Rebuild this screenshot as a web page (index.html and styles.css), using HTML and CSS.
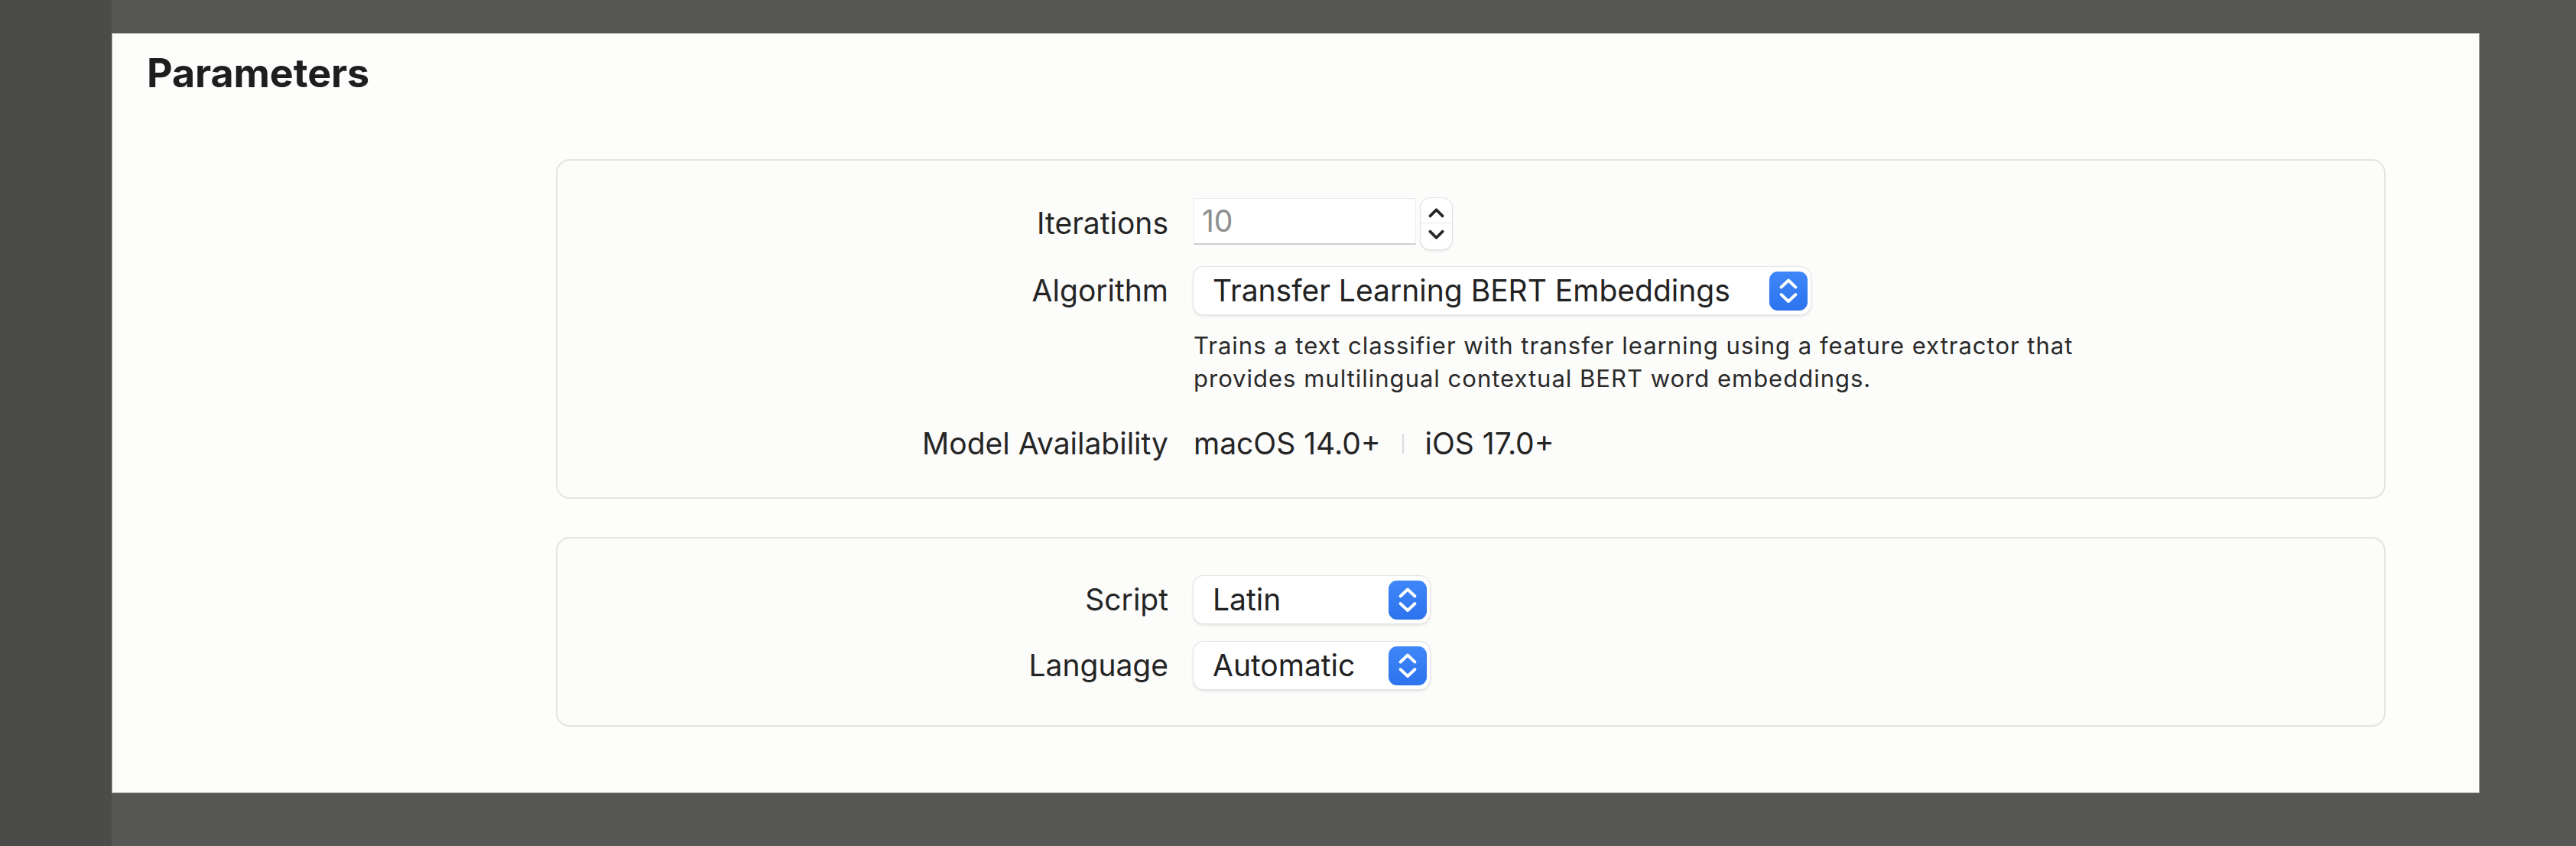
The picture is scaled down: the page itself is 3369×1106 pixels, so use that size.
FILE: index.html
```html
<!DOCTYPE html>
<html>
<head>
<meta charset="utf-8">
<link rel="stylesheet" href="styles.css">
</head>
<body>
<div class="app">
  <aside class="sidebar"></aside>
  <main class="stage">
    <section class="panel">
      <h1 class="title">Parameters</h1>
      <div class="groups">
        <div class="card card-main">
          <div class="row row-iter">
            <div class="label">Iterations</div>
            <div class="control">
              <div class="textfield">10</div>
              <div class="stepper">
                <svg class="step-up" width="40" height="32" viewBox="0 0 40 32"><path d="M12 23 L20 15 L28 23" fill="none" stroke="#262626" stroke-width="3.6" stroke-linecap="round" stroke-linejoin="round"/></svg>
                <svg class="step-down" width="40" height="32" viewBox="0 0 40 32"><path d="M12 10 L20 18 L28 10" fill="none" stroke="#262626" stroke-width="3.6" stroke-linecap="round" stroke-linejoin="round"/></svg>
              </div>
            </div>
          </div>
          <div class="row row-algo">
            <div class="label">Algorithm</div>
            <div class="control">
              <div class="popup popup-wide">
                <span class="popup-text">Transfer Learning BERT Embeddings</span>
                <span class="popup-btn"><svg width="50" height="51" viewBox="0 0 50 51"><path d="M15.5 20.5 L25 11.5 L34.5 20.5 M15.5 30 L25 39 L34.5 30" fill="none" stroke="#fff" stroke-width="3.8" stroke-linecap="round" stroke-linejoin="round"/></svg></span>
              </div>
            </div>
          </div>
          <div class="row row-desc">
            <div class="label"></div>
            <p class="desc">Trains a text classifier with transfer learning using a feature extractor that<br>provides multilingual contextual BERT word embeddings.</p>
          </div>
          <div class="row row-avail">
            <div class="label">Model Availability</div>
            <div class="control avail">
              <span>macOS 14.0+</span>
              <span class="sep"></span>
              <span>iOS 17.0+</span>
            </div>
          </div>
        </div>
        <div class="card card-lang">
          <div class="row row-pop">
            <div class="label">Script</div>
            <div class="control">
              <div class="popup popup-small">
                <span class="popup-text">Latin</span>
                <span class="popup-btn"><svg width="50" height="51" viewBox="0 0 50 51"><path d="M15.5 20.5 L25 11.5 L34.5 20.5 M15.5 30 L25 39 L34.5 30" fill="none" stroke="#fff" stroke-width="3.8" stroke-linecap="round" stroke-linejoin="round"/></svg></span>
              </div>
            </div>
          </div>
          <div class="row row-pop">
            <div class="label">Language</div>
            <div class="control">
              <div class="popup popup-small">
                <span class="popup-text">Automatic</span>
                <span class="popup-btn"><svg width="50" height="51" viewBox="0 0 50 51"><path d="M15.5 20.5 L25 11.5 L34.5 20.5 M15.5 30 L25 39 L34.5 30" fill="none" stroke="#fff" stroke-width="3.8" stroke-linecap="round" stroke-linejoin="round"/></svg></span>
              </div>
            </div>
          </div>
        </div>
      </div>
    </section>
  </main>
</div>
</body>
</html>
```
FILE: styles.css
```css
* { box-sizing: border-box; }
html, body { margin: 0; padding: 0; }
body {
  width: 3369px;
  height: 1106px;
  overflow: hidden;
  background: #565654;
  font-family: Inter, "Noto Sans", "Liberation Sans", sans-serif;
  color: #242424;
}
.app { display: flex; height: 1106px; }
.sidebar { width: 146px; flex: none; background: #4b4b4a; }
.stage { flex: 1; padding-top: 43px; }
.panel {
  width: 3097px;
  height: 994px;
  background: #fdfdfc;
  border: 1px solid #a3a3a1;
  padding: 22px 122px 0 45px;
}
.title {
  margin: 0;
  font-size: 52px;
  line-height: 60px;
  font-weight: 700;
  color: #1e1e1e;
  letter-spacing: -0.1px;
}
.groups {
  margin-top: 82px;
  margin-left: 535px;
  display: flex;
  flex-direction: column;
  gap: 50px;
}
.card {
  border: 2px solid #e4e4e2;
  border-radius: 18px;
  background: #fcfcfb;
  display: flex;
  flex-direction: column;
}
.card-main { padding: 48px 0 0 0; height: 444px; }
.card-lang { padding: 48px 0 0 0; gap: 22px; height: 248px; }
.row {
  display: grid;
  grid-template-columns: 799px 1fr;
  column-gap: 33px;
  align-items: center;
}
.label {
  text-align: right;
  font-size: 39px;
  line-height: 50px;
  color: #252525;
}
.control { display: flex; align-items: center; }
.row-iter { height: 68px; }
.row-algo { height: 62px; margin-top: 23px; }
.row-desc { margin-top: 19px; align-items: start; }
.row-avail { margin-top: 39px; height: 50px; }
.row-pop { height: 64px; }

.textfield {
  width: 291px;
  height: 61px;
  background: #ffffff;
  border: 1px solid #ececec;
  border-bottom: 2px solid #cfcfcf;
  font-size: 39px;
  line-height: 58px;
  padding-left: 10px;
  color: #8d8d8d;
  align-self: flex-start;
}
.stepper {
  margin-left: 6px;
  width: 41px;
  height: 67px;
  background: #ffffff;
  border-radius: 13px;
  box-shadow: 0 0 0 1px #e2e2e2, 0 2px 3px rgba(0,0,0,0.12);
  display: flex;
  flex-direction: column;
  overflow: hidden;
}
.stepper svg { display: block; width: 41px; height: 33.5px; }
.step-up { border-bottom: 1px solid #e6e6e6; }

.popup {
  height: 62px;
  background: #ffffff;
  border-radius: 13px;
  box-shadow: 0 0 0 1px #e3e3e3, 0 2px 4px rgba(0,0,0,0.13);
  display: flex;
  align-items: center;
  justify-content: space-between;
  padding: 0 4px 0 25px;
}
.popup-wide { width: 807px; }
.popup-small { width: 309px; padding-left: 25px; }
.popup-text { font-size: 39px; line-height: 50px; color: #222; }
.popup-btn {
  width: 50px;
  height: 51px;
  border-radius: 11px;
  background: linear-gradient(#3f87f8, #2c73ee);
  display: flex;
}
.popup-btn svg { display: block; }

.desc {
  margin: 0;
  font-size: 31px;
  line-height: 43px;
  letter-spacing: 1px;
  color: #2a2a2a;
}
.avail {
  font-size: 39px;
  line-height: 50px;
  color: #242424;
  gap: 28px;
}
.sep { width: 2px; height: 26px; background: #dcdcdc; }
```
